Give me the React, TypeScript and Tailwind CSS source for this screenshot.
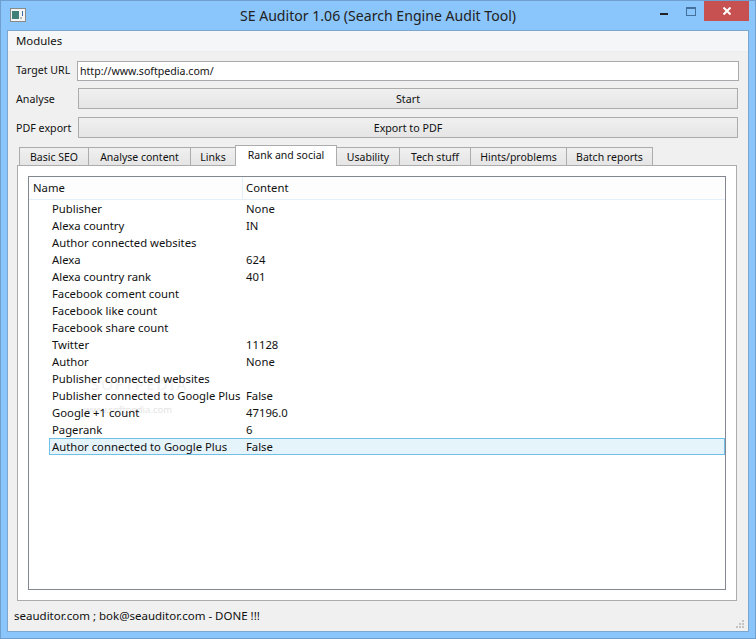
const rows = [
  ["Publisher", "None"],
  ["Alexa country", "IN"],
  ["Author connected websites", ""],
  ["Alexa", "624"],
  ["Alexa country rank", "401"],
  ["Facebook coment count", ""],
  ["Facebook like count", ""],
  ["Facebook share count", ""],
  ["Twitter", "11128"],
  ["Author", "None"],
  ["Publisher connected websites", ""],
  ["Publisher connected to Google Plus", "False"],
  ["Google +1 count", "47196.0"],
  ["Pagerank", "6"],
];

const tabs = [
  { label: "Basic SEO", width: "w-[70px]" },
  { label: "Analyse content", width: "w-[103px]" },
  { label: "Links", width: "w-[46px]" },
  { label: "Rank and social", width: "w-[102px]", active: true },
  { label: "Usability", width: "w-[64px]" },
  { label: "Tech stuff", width: "w-[72px]" },
  { label: "Hints/problems", width: "w-[97px]" },
  { label: "Batch reports", width: "w-[87px]" },
];

function ActionRow({ label, action }: { label: string; action: string }) {
  return (
    <div className="flex items-center h-[21px] text-[10.7px]">
      <span className="w-[62px] shrink-0 whitespace-nowrap relative top-px">{label}</span>
      <button className="w-[660px] h-[21px] border border-[#acacac] bg-gradient-to-b from-[#f0f0f0] to-[#e5e5e5] text-center">
        <span className="relative top-px">{action}</span>
      </button>
    </div>
  );
}

export default function App() {
  return (
    <div className="w-[756px] h-[639px] flex flex-col bg-[#8ac5fb] border border-[#6f9fcf] overflow-hidden text-[11.3px] text-[#111] font-['Noto_Sans','Open_Sans',sans-serif]">
      <div className="h-[29px] shrink-0 flex items-start">
        <svg className="ml-[9px] mt-[7px] shrink-0" width="16" height="14" viewBox="0 0 16 14">
          <rect x="0.5" y="0.5" width="15" height="13" fill="#f4f4f4" stroke="#8a8a8a" />
          <rect x="2" y="3" width="7" height="8" fill="#3f7f78" />
          <rect x="10" y="9" width="2" height="2" fill="#b8b8b8" />
          <rect x="12" y="3" width="1" height="5" fill="#3a6ea5" />
        </svg>
        <span className="flex-1 text-center text-[14.1px] leading-[30px] pl-[70px] text-[#222] whitespace-nowrap">
          SE Auditor 1.06 (Search Engine Audit Tool)
        </span>
        <div className="flex items-start mr-[6px] shrink-0">
          <svg className="mt-[11px] mr-[18px]" width="8" height="4" viewBox="0 0 8 4">
            <rect width="8" height="2" y="1" fill="#222" />
          </svg>
          <svg className="mt-[6px] mr-[8px]" width="10" height="9" viewBox="0 0 10 9">
            <rect x="0.5" y="0.5" width="9" height="8" fill="none" stroke="#44709c" />
            <rect width="10" height="2" fill="#44709c" />
          </svg>
          <div className="w-[45px] h-[20px] bg-[#c75050] flex items-center justify-center">
            <svg width="8" height="8" viewBox="0 0 8 8">
              <path d="M0.5 0.5 L7.5 7.5 M7.5 0.5 L0.5 7.5" stroke="#fff" strokeWidth="2" />
            </svg>
          </div>
        </div>
      </div>

      <div className="mx-[6px] mb-[6px] flex-1 flex flex-col border border-[#7ba7cf] bg-[#f0f0f0] relative">
        <div className="h-[21px] shrink-0 bg-[#f5f6f7] border-b border-[#ececec] pl-[8px] leading-[19px] text-[11.4px]">
          Modules
        </div>

        <div className="pl-[8px] pt-[9px] flex flex-col">
          <div className="flex items-center h-[20px] text-[10.6px]">
            <span className="w-[61px] shrink-0 whitespace-nowrap">Target URL</span>
            <div className="w-[662px] h-[20px] border border-[#a9a9ad] bg-white pl-[2px] leading-[18px]">
              http://www.softpedia.com/
            </div>
          </div>
          <div className="mt-[7px]">
            <ActionRow label="Analyse" action="Start" />
          </div>
          <div className="mt-[8px]">
            <ActionRow label="PDF export" action="Export to PDF" />
          </div>
        </div>

        <div className="flex items-end ml-[11px] mt-[7px] h-[20px] shrink-0 relative z-10 text-[10.5px]">
          {tabs.map((tab) =>
            tab.active ? (
              <div
                key={tab.label}
                className={`${tab.width} h-[21px] mb-[-1px] -mr-px bg-white border border-b-0 border-[#acacac] text-center leading-[19px] relative whitespace-nowrap`}
              >
                {tab.label}
              </div>
            ) : (
              <div
                key={tab.label}
                className={`${tab.width} h-[18px] -mr-px bg-gradient-to-b from-[#f0f0f0] to-[#e5e5e5] border border-b-0 border-[#acacac] text-center leading-[18px] whitespace-nowrap`}
              >
                {tab.label}
              </div>
            ),
          )}
        </div>

        <div className="ml-[9px] w-[720px] h-[436px] bg-white border border-[#acacac] p-[10px]">
          <div className="h-full border border-[#828790] bg-white flex flex-col relative">
            <div className="h-[23px] shrink-0 flex bg-[#fdfdfd] border-b border-[#e5eff8] leading-[22px]">
              <span className="w-[214px] pl-[4px] border-r border-[#e5eff8]">Name</span>
              <span className="pl-[3px]">Content</span>
            </div>
            {rows.map(([name, value]) => (
              <div key={name} className="h-[17px] flex leading-[17px] pl-[23px] relative z-10">
                <span className="w-[194px] whitespace-nowrap">{name}</span>
                <span>{value}</span>
              </div>
            ))}
            <div className="h-[17px] ml-[20px] flex bg-[#e5f3fb] border border-[#70c0e7] leading-[15px] pl-[2px]">
              <span className="w-[194px] whitespace-nowrap">Author connected to Google Plus</span>
              <span>False</span>
            </div>
            <div className="absolute left-[62px] top-[196px] text-[15px] text-[#f2f2f2] tracking-[2px] whitespace-nowrap">
              SOFTPEDIA
            </div>
            <div className="absolute left-[55px] top-[226px] text-[9.5px] text-[#e4e4e4] whitespace-nowrap">
              www.softpedia.com
            </div>
          </div>
        </div>

        <div className="flex-1 pl-[6px] flex items-center text-[11.5px]">
          seauditor.com ; bok@seauditor.com - DONE !!!
        </div>

        <svg className="absolute right-[3px] bottom-[2px]" width="9" height="9" viewBox="0 0 9 9" fill="#c4c4c4">
          <rect x="6" y="0" width="2" height="2" />
          <rect x="3" y="3" width="2" height="2" />
          <rect x="6" y="3" width="2" height="2" />
          <rect x="0" y="6" width="2" height="2" />
          <rect x="3" y="6" width="2" height="2" />
          <rect x="6" y="6" width="2" height="2" />
        </svg>
      </div>
    </div>
  );
}
